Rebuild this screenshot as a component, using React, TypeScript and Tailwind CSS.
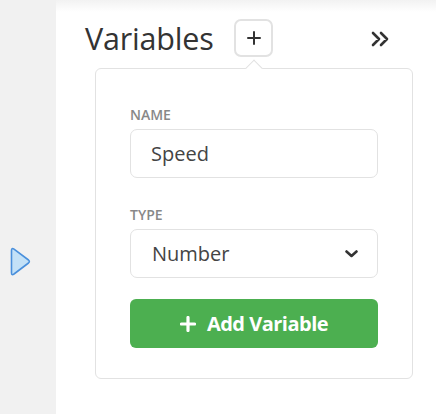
import React from 'react';

const font = { fontFamily: '"Open Sans", "Noto Sans", sans-serif' };

const PlayMarker: React.FC = () => (
  <svg width="22" height="32" viewBox="0 0 22 32" className="block">
    <path d="M2.5 4.5 Q2.5 1.5 5 3.2 L19.5 14 Q21.2 15.5 19.5 17 L5 28 Q2.5 29.8 2.5 26.8 Z" fill="#c3e1f7" stroke="#4a90dc" strokeWidth="1.6" strokeLinejoin="round" />
  </svg>
);

const CollapseIcon: React.FC = () => (
  <svg width="18" height="16" viewBox="0 0 18 16" className="block">
    <path d="M2 2 L8 8 L2 14 M10 2 L16 8 L10 14" fill="none" stroke="#333" strokeWidth="2.6" strokeLinecap="round" strokeLinejoin="round" />
  </svg>
);

const Chevron: React.FC = () => (
  <svg width="13" height="8" viewBox="0 0 13 8" className="block">
    <path d="M1.5 1.5 L6.5 6 L11.5 1.5" fill="none" stroke="#333" strokeWidth="2.6" strokeLinecap="round" strokeLinejoin="round" />
  </svg>
);

export default function App() {
  return (
    <div className="flex w-[436px] h-[414px] overflow-hidden" style={font}>
      <div className="w-[56px] shrink-0 bg-[#f1f1f1] flex flex-col pt-[246px] pl-[9px]">
        <PlayMarker />
      </div>
      <div className="flex-1 bg-[linear-gradient(to_bottom,#f2f2f2,#ffffff_12px)] pt-[19px]">
        <div className="flex items-center h-[38px] pl-[29px]">
          <h1 className="text-[30.5px] leading-[38px] text-[#333] tracking-[-0.2px] -mt-[1px]">Variables</h1>
          <button className="ml-[21px] w-[39px] h-[38px] rounded-[7px] border-2 border-[#e2e2e2] bg-white flex items-center justify-center">
            <svg width="14" height="14" viewBox="0 0 14 14" className="block">
              <path d="M7 1 V13 M1 7 H13" stroke="#333" strokeWidth="2" strokeLinecap="round" />
            </svg>
          </button>
          <div className="ml-[98px] mt-[1px]">
            <CollapseIcon />
          </div>
        </div>
        <div className="relative ml-[39px] mt-[11px] w-[318px] h-[311px] rounded-[6px] border border-[#e2e2e2] bg-white px-[34px] pt-[37px]">
          <div className="absolute -top-[7px] left-[152px] w-[12px] h-[12px] rotate-45 bg-white border-l border-t border-[#e2e2e2]" />
          <label className="block text-[14px] leading-[18px] font-semibold text-[#888]">NAME</label>
          <div className="mt-[5px] h-[49px] rounded-[7px] border border-[#e2e2e2] flex items-center pl-[20px] text-[20px] text-[#444]">Speed</div>
          <label className="block mt-[28px] text-[14px] leading-[18px] font-semibold text-[#888]">TYPE</label>
          <div className="mt-[5px] h-[49px] rounded-[7px] border border-[#e2e2e2] flex items-center justify-between pl-[21px] pr-[19px] text-[20px] text-[#444]">
            <span>Number</span>
            <Chevron />
          </div>
          <button className="mt-[21px] w-full h-[49px] rounded-[6px] bg-[#4caf50] flex items-center justify-center gap-[11px] text-white text-[20px] font-bold">
            <svg width="16" height="16" viewBox="0 0 16 16" className="block">
              <path d="M8 1.5 V14.5 M1.5 8 H14.5" stroke="#fff" strokeWidth="3.2" strokeLinecap="round" />
            </svg>
            <span className="tracking-[-0.5px]">Add Variable</span>
          </button>
        </div>
      </div>
    </div>
  );
}
